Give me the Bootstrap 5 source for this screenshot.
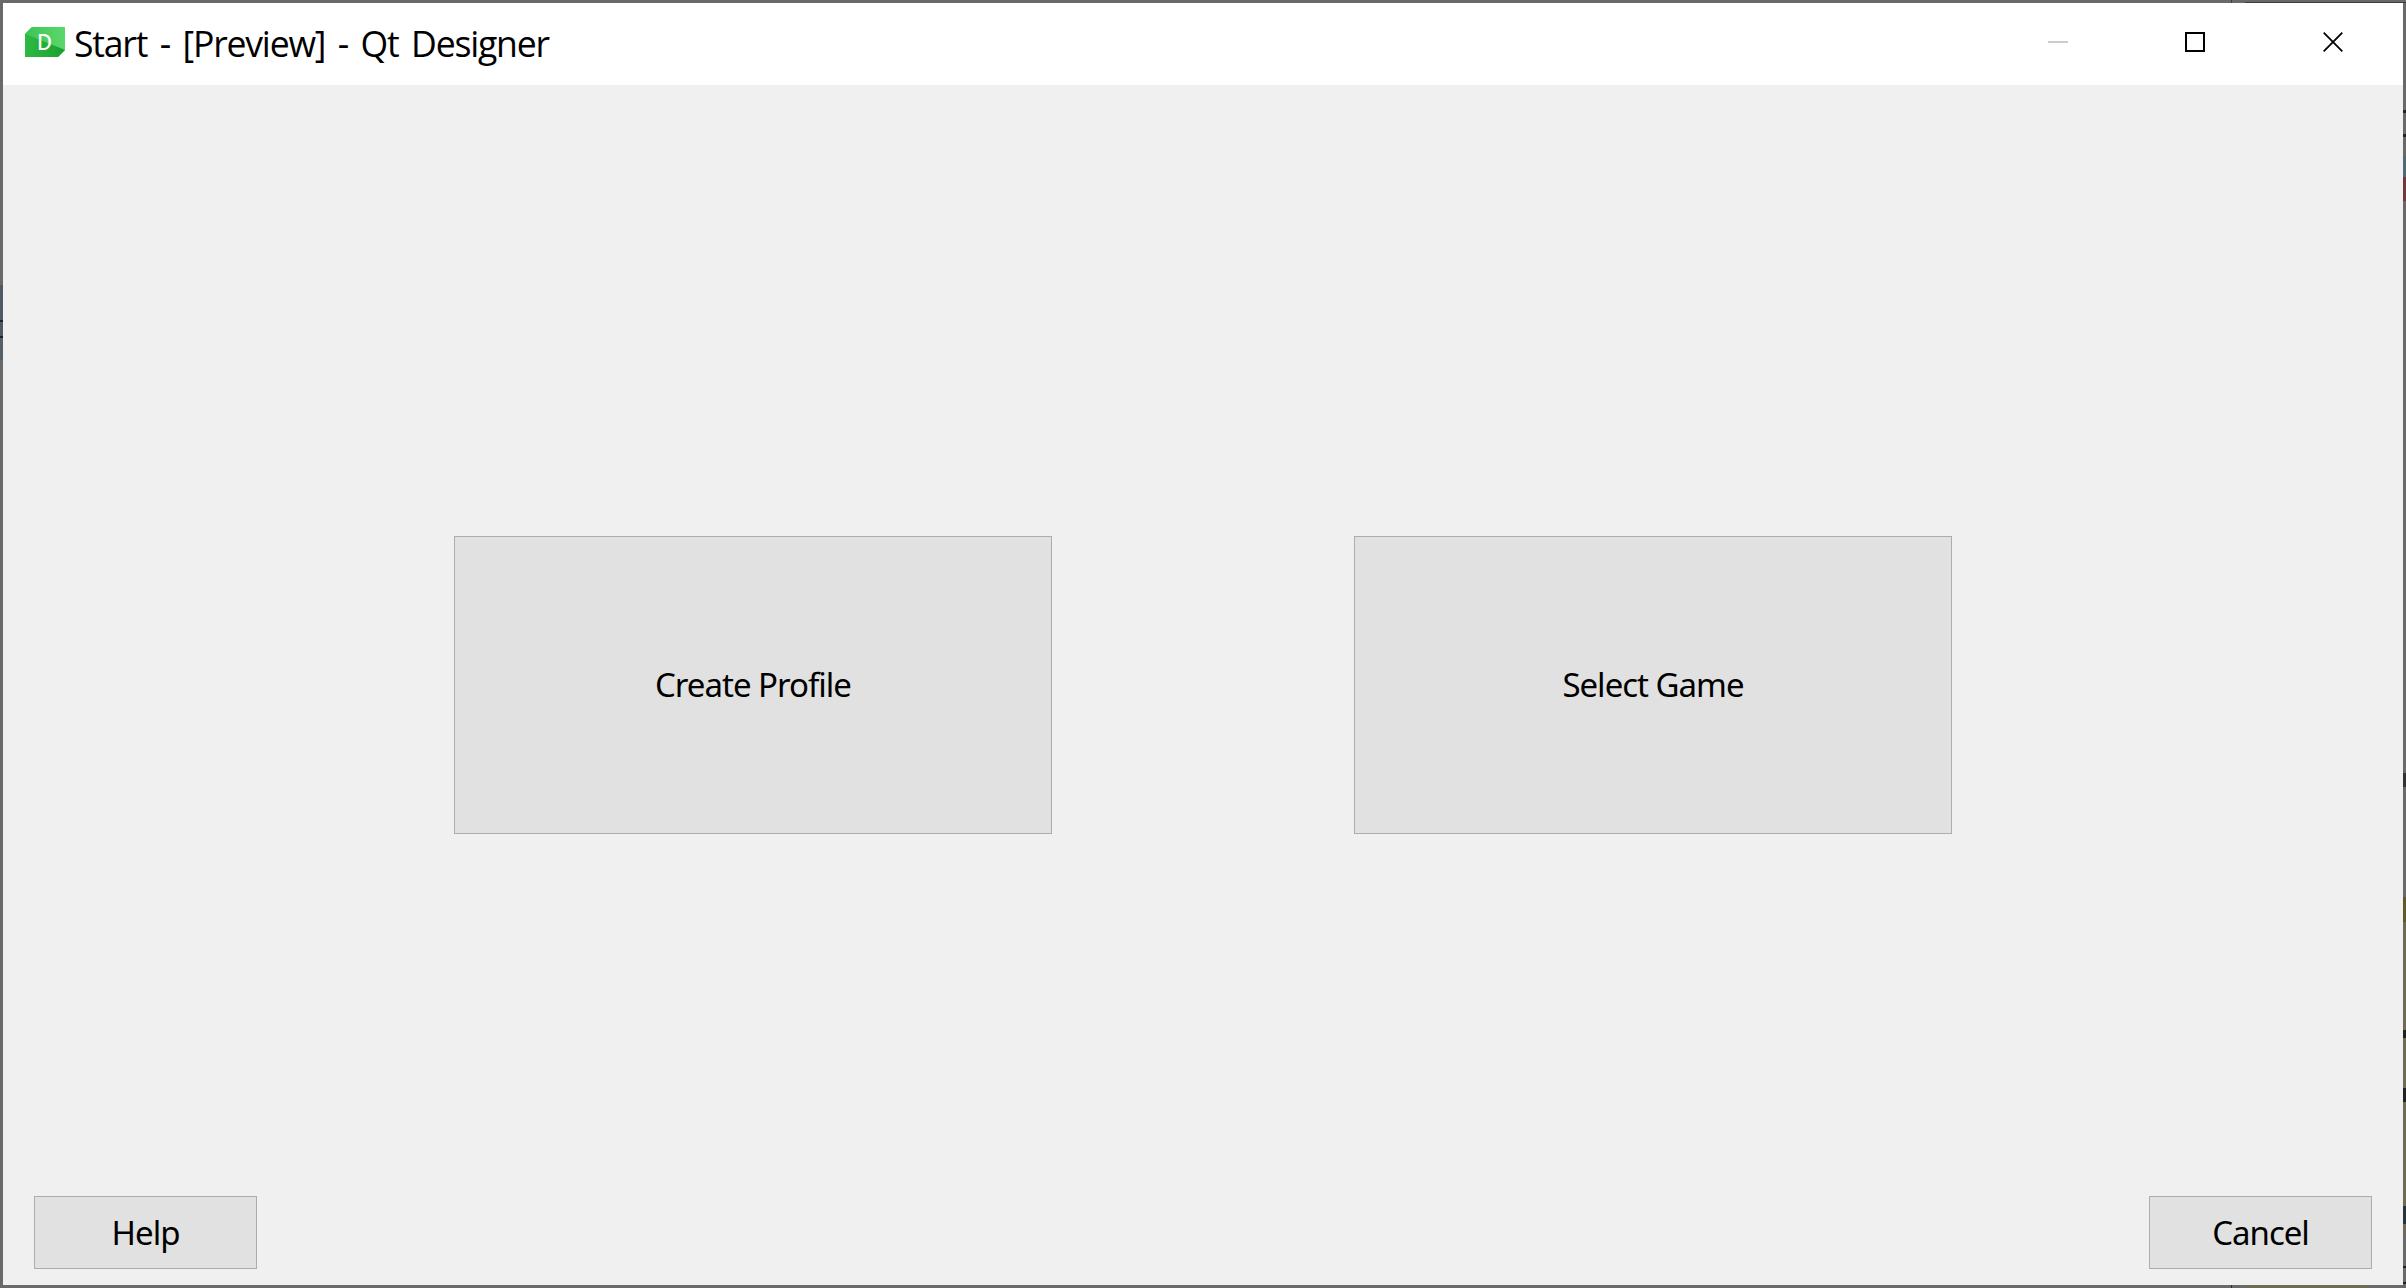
<!DOCTYPE html>
<html lang="en">
<head>
<meta charset="utf-8">
<title>Start - [Preview] - Qt Designer</title>
<link href="https://cdn.jsdelivr.net/npm/bootstrap@5.3.0/dist/css/bootstrap.min.css" rel="stylesheet">
<style>
body{height:1288px;background:#696969;font-family:"Noto Sans",sans-serif;color:#000}
/* translucent frame: tints of what lies behind the window */
.window{width:2406px;height:1288px;padding:3px;
  background:
    linear-gradient(#2e2e2e,#2e2e2e) 2231px 1285px/1px 3px no-repeat,
    linear-gradient(#6d6b54,#6d6b54) 2247px 1285px/121px 3px no-repeat,
    linear-gradient(#3c3c3c,#3c3c3c) 2231px 0/1px 3px no-repeat,
    linear-gradient(#3c3c3c,#3c3c3c) 2245px 2px/161px 1px no-repeat,
    linear-gradient(#696969 285px,#4f5963 285px 320px,#222 320px 322px,#4f5963 322px 336px,#222 336px 338px,#566069 338px 360px,#696969 360px) 0 0/3px 1285px no-repeat,
    linear-gradient(#696969 110px,#222 110px 113px,#696969 113px 134px,#222 134px 137px,#696969 137px 156px,#526a76 156px 177px,#74383c 177px 201px,#696969 201px 773px,#333 773px 787px,#696969 787px 897px,#5f5a2a 897px 922px,#6d6b54 922px 1030px,#222 1030px 1038px,#6d6b54 1038px 1088px,#222 1088px 1102px,#6d6b54 1102px 1206px,#26343c 1206px 1224px,#6d6b54 1224px 1235px,#696969 1235px 1266px,#222 1266px 1268px,#696969 1268px 1282px,#222 1282px 1284px,#696969 1284px) 2403px 0/3px 1288px no-repeat,
    #696969}
.titlebar{height:82px;padding:0 1px 0 22px}
.title-text{font-family:"Open Sans",sans-serif;font-size:35.6px;line-height:48px;letter-spacing:-1.2px;word-spacing:4.5px;margin:-2px 0 0 9px;white-space:nowrap}
.app-icon{margin-top:-4px}
.win-btn{width:138px;height:82px;padding:0 0 4px;border:0;background:none}
.win-btn:first-child{width:136px}
.client{background:#f0f0f0;padding:0 31px 16px}
.qt-btn{background:#e1e1e1;border:1px solid #adadad;border-radius:0;color:#000;font-size:33px;line-height:44px;letter-spacing:-1px;padding:0;white-space:nowrap}
.qt-btn.big{width:598px;height:298px}
.qt-btn.dlg{width:223px;height:73px}
.choices{gap:302px;padding-top:451px}
</style>
</head>
<body class="m-0 overflow-hidden">
<div class="window d-flex flex-column">
  <header class="titlebar bg-white d-flex align-items-center">
    <svg class="app-icon" width="40" height="30" viewBox="0 0 40 30">
      <defs>
        <linearGradient id="g1" x1="0" y1="0" x2="1" y2="0"><stop offset="0" stop-color="#3cc553"/><stop offset="1" stop-color="#5bd76d"/></linearGradient>
        <linearGradient id="g2" x1="0" y1="0" x2="1" y2="0"><stop offset="0" stop-color="#2dba43"/><stop offset="1" stop-color="#1a9f2e"/></linearGradient>
      </defs>
      <path d="M7 0H40V23L33 30H0V7Z" fill="#36c24c"/>
      <path d="M7 0H40V23L0 7Z" fill="url(#g1)"/>
      <path d="M0 7L40 23L33 30H0Z" fill="url(#g2)"/>
      <text x="19.5" y="22.5" text-anchor="middle" font-family="Noto Sans" font-size="22" font-weight="500" fill="#fff" textLength="15" lengthAdjust="spacingAndGlyphs">D</text>
    </svg>
    <span class="title-text">Start - [Preview] - Qt Designer</span>
    <div class="d-flex ms-auto">
      <button class="win-btn" disabled aria-label="Minimize"><svg class="d-block mx-auto" width="20" height="20"><path d="M0 10H20" stroke="#ccc" stroke-width="2"/></svg></button>
      <button class="win-btn" aria-label="Maximize"><svg class="d-block mx-auto" width="20" height="20"><path d="M1 1H19V19H1Z" fill="none" stroke="#000" stroke-width="2"/></svg></button>
      <button class="win-btn" aria-label="Close"><svg class="d-block mx-auto" width="20" height="20"><path d="M.7 .7L19.3 19.3M19.3 .7L.7 19.3" stroke="#000" stroke-width="1.8"/></svg></button>
    </div>
  </header>
  <main class="client flex-grow-1 d-flex flex-column justify-content-between">
    <div class="choices d-flex justify-content-center">
      <button class="btn qt-btn big"><span>Create Profile</span></button>
      <button class="btn qt-btn big"><span>Select Game</span></button>
    </div>
    <div class="d-flex justify-content-between">
      <button class="btn qt-btn dlg"><span>Help</span></button>
      <button class="btn qt-btn dlg"><span>Cancel</span></button>
    </div>
  </main>
</div>
<script src="https://cdn.jsdelivr.net/npm/bootstrap@5.3.0/dist/js/bootstrap.bundle.min.js"></script>
</body>
</html>
